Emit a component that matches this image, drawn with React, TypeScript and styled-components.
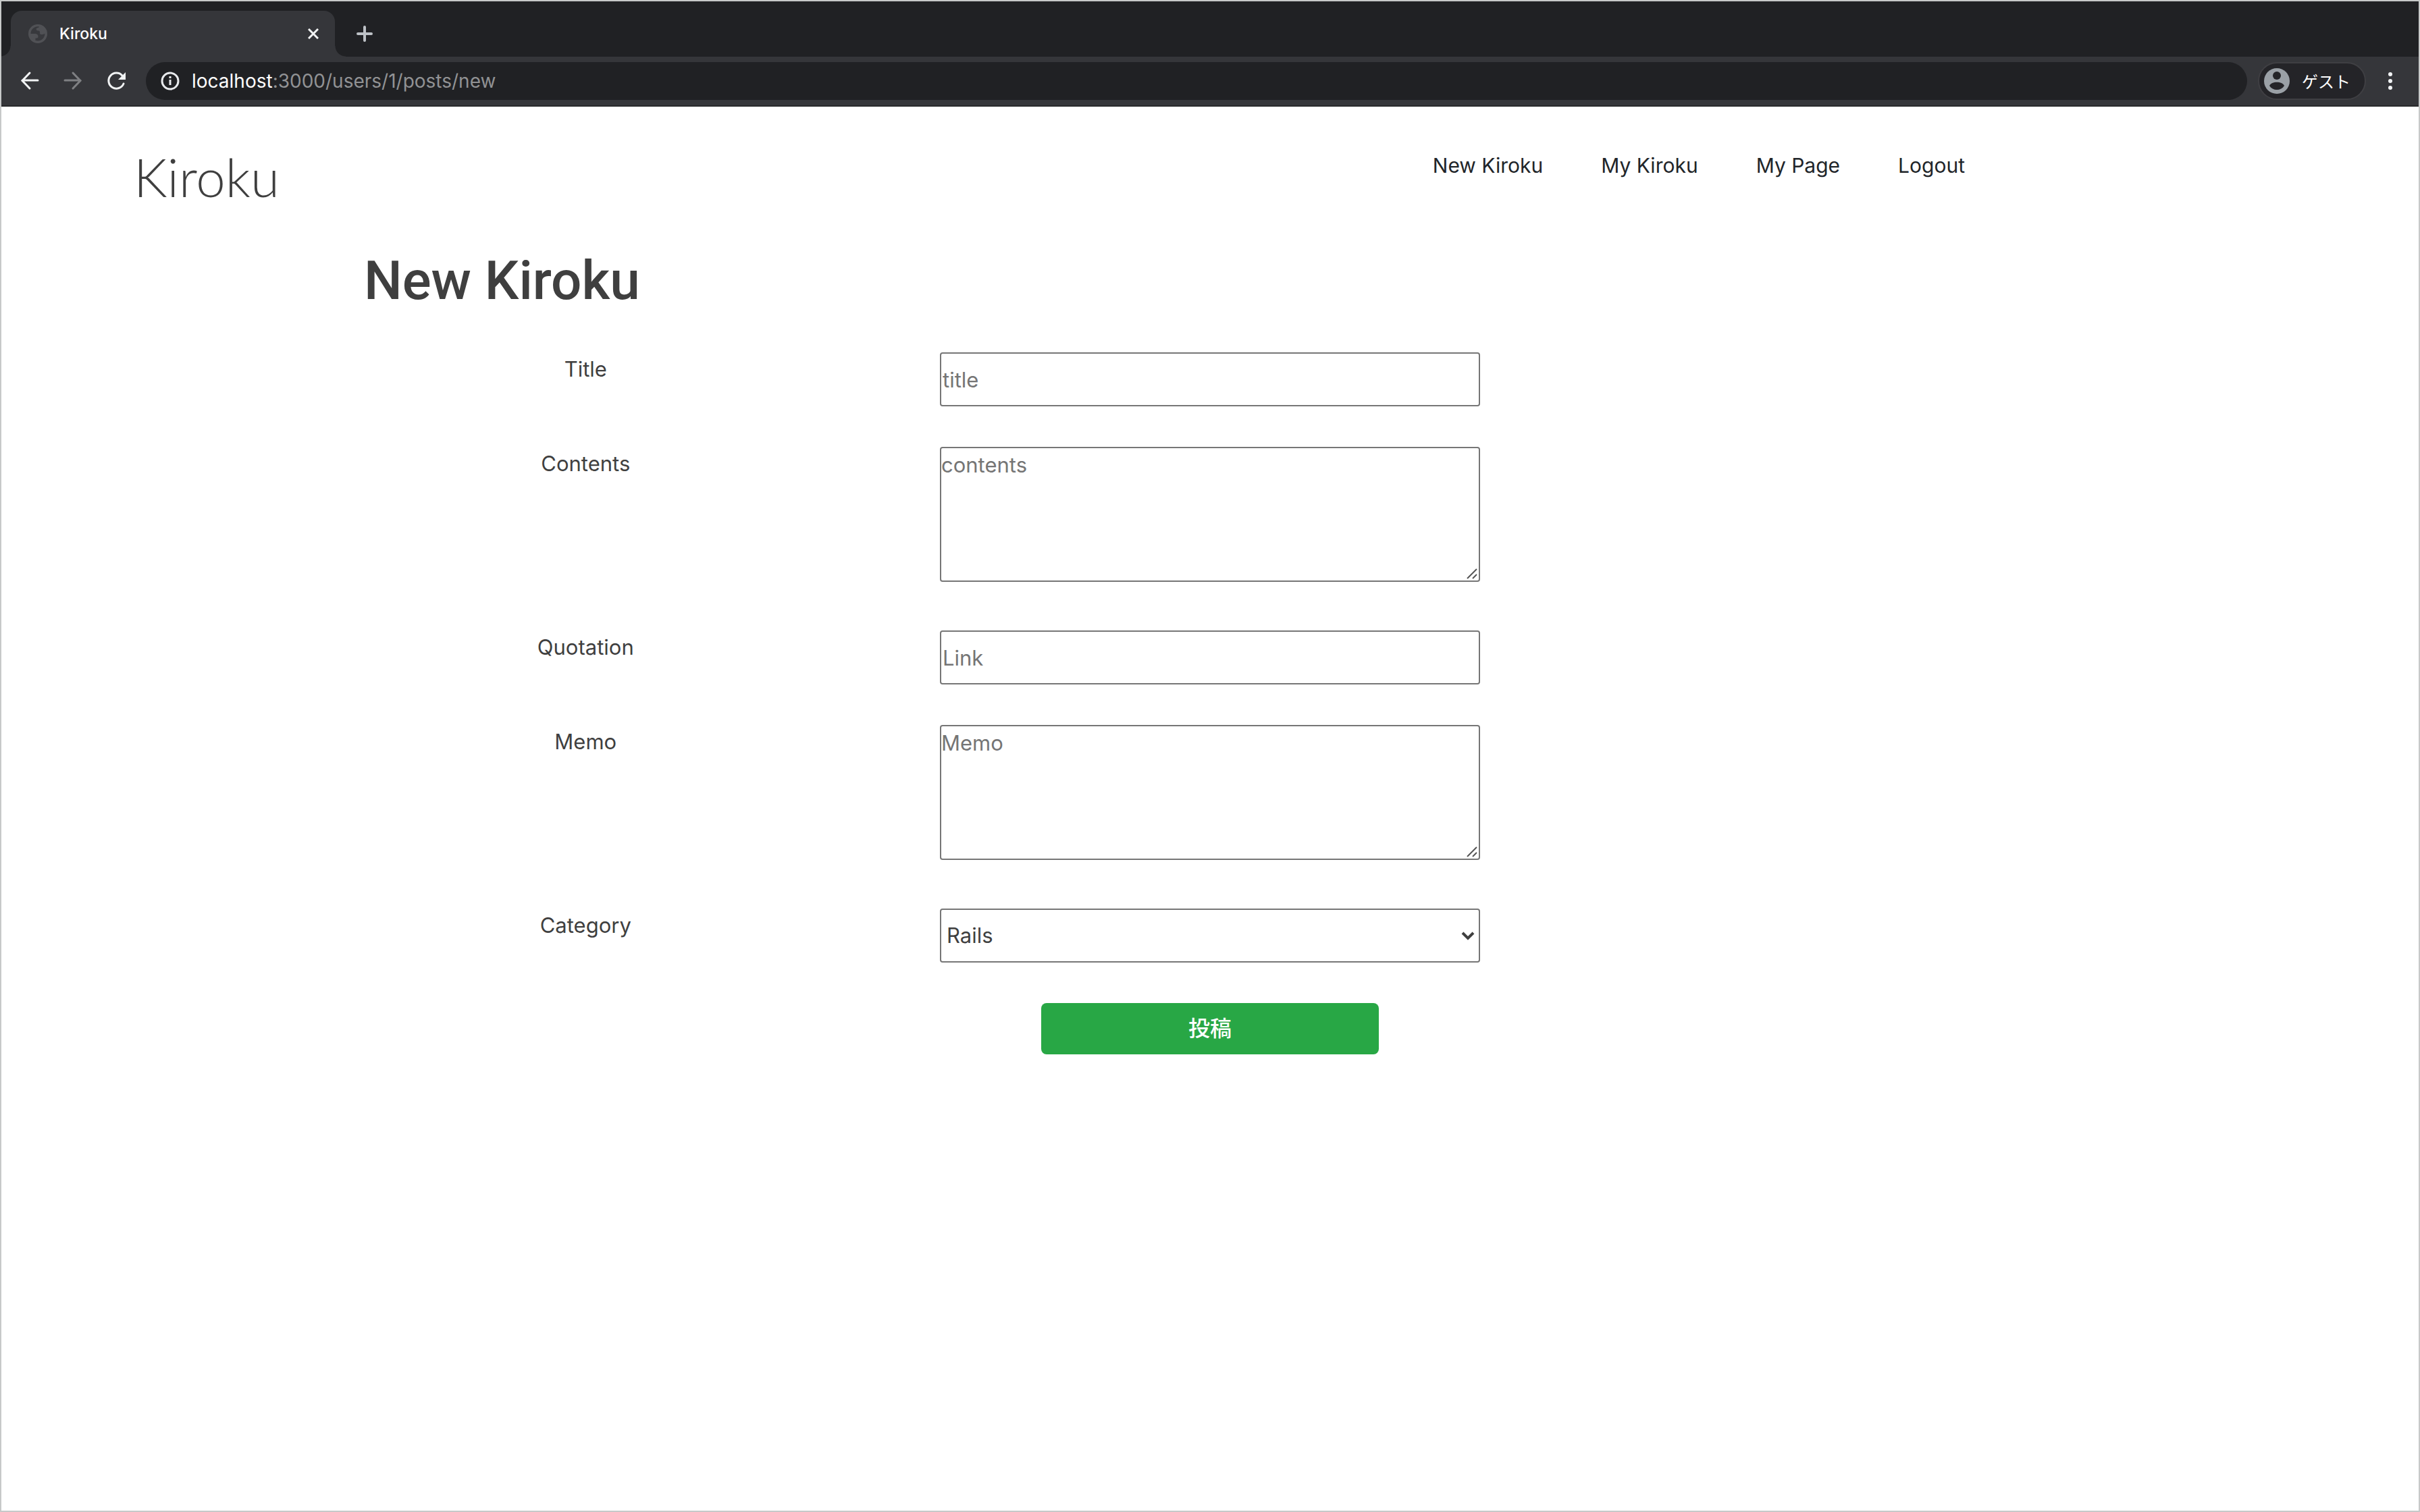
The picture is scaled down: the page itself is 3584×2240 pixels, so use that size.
import React from "react";
import styled, { createGlobalStyle } from "styled-components";

const GlobalStyle = createGlobalStyle`
  *, *::before, *::after { box-sizing: border-box; }
  body {
    margin: 0;
    background: #fff;
    color: #3f3f3f;
    font: 400 31px/50px Inter, "Noto Sans CJK JP", sans-serif;
  }
  button, input, textarea, select { font: inherit; color: inherit; margin: 0; }
`;

const Window = styled.div`
  min-height: 100vh;
  border: 2px solid #c7c9c9;
  background: #fff;
`;

const TabStrip = styled.div`
  display: flex;
  align-items: flex-end;
  height: 82px;
  padding: 0 14px;
  background: #202124;
  overflow: hidden;
`;

const Tab = styled.div`
  position: relative;
  display: flex;
  align-items: center;
  width: 480px;
  height: 68px;
  padding: 0 24px 0 26px;
  border-radius: 16px 16px 0 0;
  background: #35363a;
  color: #fff;

  &::before, &::after {
    content: "";
    position: absolute;
    bottom: 0;
    width: 16px;
    height: 16px;
  }
  &::before {
    right: 100%;
    background: radial-gradient(circle at 0 0, #202124 15px, #35363a 16px);
  }
  &::after {
    left: 100%;
    background: radial-gradient(circle at 100% 0, #202124 15px, #35363a 16px);
  }
`;

const TabTitle = styled.span`
  flex: 1;
  margin-left: 18px;
  font-size: 23px;
  font-weight: 500;
`;

const IconButton = styled.button<{ $tone?: string }>`
  display: flex;
  padding: 0;
  border: 0;
  background: none;
  color: ${(p) => p.$tone ?? "#f1f3f4"};
`;

const NewTab = styled(IconButton)`
  align-self: center;
  margin: 14px 0 0 32px;
`;

const Toolbar = styled.div`
  display: flex;
  align-items: center;
  height: 74px;
  padding: 0 26px;
  border-bottom: 2px solid #28292c;
  background: #35363a;
`;

const NavButtons = styled.div`
  display: flex;
  gap: 32px;
  margin-right: 28px;
`;

const AddressBar = styled.div`
  flex: 1;
  display: flex;
  align-items: center;
  gap: 16px;
  height: 56px;
  padding: 0 20px;
  border-radius: 28px;
  background: #202124;
  color: #919294;
  font-size: 28px;

  b { color: #fff; font-weight: 400; }
`;

const Profile = styled.button`
  display: flex;
  align-items: center;
  gap: 18px;
  width: 160px;
  height: 56px;
  margin: 0 20px 0 16px;
  padding: 0 7px;
  border: 2px solid #3f3f43;
  border-radius: 28px;
  background: #242428;
  color: #fff;
  font: 400 24px/32px "Noto Sans CJK JP", sans-serif;
`;

const Header = styled.header`
  display: flex;
  justify-content: space-between;
  align-items: flex-start;
  height: 158px;
  padding: 62px 672px 0 196px;
`;

const Logo = styled.a`
  color: #3f3f3f;
  font: 300 78px/84px Lato, Inter, sans-serif;
  text-decoration: none;
`;

const Menu = styled.nav`
  display: flex;
  gap: 86px;
  font-size: 30px;

  a { color: #212529; text-decoration: none; }
`;

const Main = styled.main`
  padding: 52px 15%;
`;

const Heading = styled.h1`
  margin: 0 0 58px;
  font: 500 80px/96px Roboto, Inter, sans-serif;
`;

const Row = styled.div<{ $gap?: number }>`
  display: grid;
  grid-template-columns: 26.2% 47.6%;
  justify-items: center;
  align-items: start;
  margin-bottom: ${(p) => p.$gap ?? 60}px;
`;

const Field = styled.div`
  position: relative;
  display: flex;
  width: 800px;
  max-width: 100%;
`;

const control = `
  display: block;
  width: 100%;
  border: 2px solid #767676;
  border-radius: 4px;
  background: #fff;
  outline: 0;
  &::placeholder { color: #757575; opacity: 1; }
`;

const TextInput = styled.input`
  ${control}
  height: 80px;
  padding: 2px;
`;

const TextArea = styled.textarea`
  ${control}
  height: 200px;
  padding: 0;

  &::-webkit-resizer { background: transparent; }
`;

const Grip = styled.svg`
  position: absolute;
  right: 4px;
  bottom: 4px;
  pointer-events: none;
`;

const Select = styled.select`
  ${control}
  height: 80px;
  padding: 0 8px;
  appearance: none;
`;

const Chevron = styled.svg`
  position: absolute;
  right: 6px;
  top: 33px;
  pointer-events: none;
`;

const Submit = styled.button`
  grid-column: 2;
  width: 500px;
  max-width: 100%;
  height: 76px;
  border: 0;
  border-radius: 8px;
  background: #28a745;
  color: #fff;
  font-size: 32px;
  font-weight: 500;
`;

const line = { fill: "none", stroke: "currentColor" };

const Globe = () => (
  <svg width="28" height="28" viewBox="0 0 28 28">
    <circle cx="14" cy="14" r="14" fill="#505155" />
    <path
      d="M3.500 14C3.500 8 8 3.500 14 3.300L16 3.500C16 5 13 5 12 6C11 8 12 9.500 15 9.500C17 9.500 17.500 11 17 14C18 15.500 21 15.500 24.500 14C24 20 20 24.500 14 24.600L10.500 24V20.500C14 20.500 14.500 20 14.500 18C14.500 15 12 14 10 14Z"
      fill="#38393d"
    />
  </svg>
);

const Area = ({ id, placeholder }: { id: string; placeholder: string }) => (
  <Field>
    <TextArea id={id} placeholder={placeholder} />
    <Grip width="16" height="16" viewBox="0 0 16 16" fill="none" stroke="#555" strokeWidth="2">
      <path d="M1 15L15 1M9 15l6-6" />
    </Grip>
  </Field>
);

const App = () => (
  <>
    <GlobalStyle />
    <Window>
      <TabStrip>
        <Tab>
          <Globe />
          <TabTitle>Kiroku</TabTitle>
          <IconButton aria-label="Close tab">
            <svg width="16" height="16" viewBox="0 0 16 16" {...line} strokeWidth="3">
              <path d="M1 1l14 14M15 1L1 15" />
            </svg>
          </IconButton>
        </Tab>
        <NewTab aria-label="New tab" $tone="#bdc1c6">
          <svg width="24" height="24" viewBox="0 0 24 24" {...line} strokeWidth="4" strokeLinecap="round">
            <path d="M12 2v20M2 12h20" />
          </svg>
        </NewTab>
      </TabStrip>

      <Toolbar>
        <NavButtons>
          <IconButton aria-label="Back">
            <svg width="32" height="32" viewBox="0 0 32 32" {...line} strokeWidth="3" strokeLinecap="round">
              <path d="M28 15H5M16 4L5 15.500l11 11.500" />
            </svg>
          </IconButton>
          <IconButton aria-label="Forward" $tone="#7f8083">
            <svg width="32" height="32" viewBox="0 0 32 32" {...line} strokeWidth="3" strokeLinecap="round">
              <path d="M4 15h23M16 4l11 11.500L16 27" />
            </svg>
          </IconButton>
          <IconButton aria-label="Reload">
            <svg width="32" height="32" viewBox="0 0 32 32" {...line} strokeWidth="3">
              <path d="M27 20a11.500 11.500 0 1 1-2-12" strokeLinecap="round" />
              <path d="M30 3v11H19z" fill="currentColor" stroke="none" />
            </svg>
          </IconButton>
        </NavButtons>
        <AddressBar>
          <svg width="32" height="32" viewBox="0 0 32 32" {...line} stroke="#e8eaed" strokeWidth="3">
            <circle cx="16" cy="16" r="12" />
            <path d="M16 14v8M16 9v3" />
          </svg>
          <span><b>localhost</b>:3000/users/1/posts/new</span>
        </AddressBar>
        <Profile>
          <svg width="38" height="38" viewBox="0 0 38 38">
            <circle cx="19" cy="19" r="19" fill="#9aa0a6" />
            <circle cx="19" cy="11" r="6" fill="#242428" />
            <path d="M8 26c3-7 19-7 22 0-5 8-17 8-22 0z" fill="#242428" />
          </svg>
          ゲスト
        </Profile>
        <IconButton aria-label="Menu">
          <svg width="32" height="32" viewBox="0 0 32 32" fill="currentColor">
            <circle cx="16" cy="6" r="3" />
            <circle cx="16" cy="16" r="3" />
            <circle cx="16" cy="26" r="3" />
          </svg>
        </IconButton>
      </Toolbar>

      <Header>
        <Logo href="#">Kiroku</Logo>
        <Menu>
          <a href="#new">New Kiroku</a>
          <a href="#mine">My Kiroku</a>
          <a href="#page">My Page</a>
          <a href="#logout">Logout</a>
        </Menu>
      </Header>

      <Main>
        <Heading>New Kiroku</Heading>
        <form>
          <Row>
            <label htmlFor="title">Title</label>
            <Field><TextInput id="title" placeholder="title" /></Field>
          </Row>
          <Row $gap={72}>
            <label htmlFor="contents">Contents</label>
            <Area id="contents" placeholder="contents" />
          </Row>
          <Row>
            <label htmlFor="quotation">Quotation</label>
            <Field><TextInput id="quotation" placeholder="Link" /></Field>
          </Row>
          <Row $gap={72}>
            <label htmlFor="memo">Memo</label>
            <Area id="memo" placeholder="Memo" />
          </Row>
          <Row>
            <label htmlFor="category">Category</label>
            <Field>
              <Select id="category" defaultValue="Rails">
                <option>Rails</option>
              </Select>
              <Chevron width="24" height="16" viewBox="0 0 24 16" {...line} strokeWidth="4">
                <path d="M4 3l8 8 8-8" />
              </Chevron>
            </Field>
          </Row>
          <Row $gap={0}>
            <Submit type="button">投稿</Submit>
          </Row>
        </form>
      </Main>
    </Window>
  </>
);

export default App;
